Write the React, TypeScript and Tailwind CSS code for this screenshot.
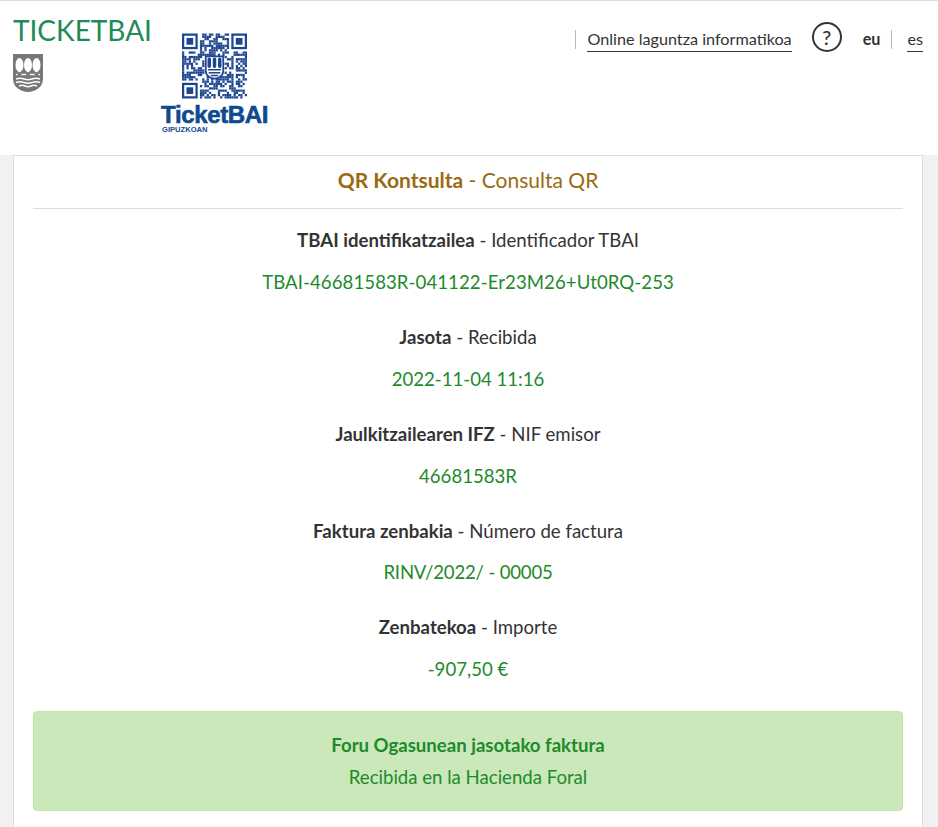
import React from 'react';

const ROWS = [
  { eu: 'TBAI identifikatzailea', es: 'Identificador TBAI', value: 'TBAI-46681583R-041122-Er23M26+Ut0RQ-253', tracking: 'tracking-[0.07px]', gap: 'mb-[15px]' },
  { eu: 'Jasota', es: 'Recibida', value: '2022-11-04 11:16', tracking: '', gap: 'mb-[15px]' },
  { eu: 'Jaulkitzailearen IFZ', es: 'NIF emisor', value: '46681583R', tracking: '', gap: 'mb-[15px]' },
  { eu: 'Faktura zenbakia', es: 'Número de factura', value: 'RINV/2022/ - 00005', tracking: 'tracking-[-0.2px]', gap: 'mb-[14px]' },
  { eu: 'Zenbatekoa', es: 'Importe', value: '-907,50 €', tracking: '', gap: 'mb-[15px]' },
];

const Shield = () => (
  <svg viewBox="0 0 30 38" className="w-[30px] h-[38px] mt-[6.5px]">
    <path d="M0 0H30V25C30 33 22 38 15 38C8 38 0 33 0 25Z" fill="#777777" />
    {[6.5, 15, 23.5].map((x) => (
      <g key={x}>
        <ellipse cx={x} cy="11" rx="4" ry="7" fill="#ffffff" />
        <rect x={x - 1} y="15" width="2" height="6" fill="#ffffff" />
      </g>
    ))}
    <path d="M3 20.5H27" stroke="#ffffff" strokeWidth="1.4" />
    {[6.5, 15, 23.5].map((x) => (
      <circle key={x} cx={x} cy="20" r="2" fill="#777777" />
    ))}
    <path d="M3 25Q7 23.5 11 25T19 25T27 25" stroke="#ffffff" strokeWidth="1.4" fill="none" />
    <path d="M3 28.5Q7 27 11 28.5T19 28.5T27 28.5" stroke="#ffffff" strokeWidth="1.4" fill="none" />
    <path d="M6 32Q9 30.5 12 32T18 32T24 32" stroke="#ffffff" strokeWidth="1.4" fill="none" />
  </svg>
);

// not a real code, only the look of one
const QR_SIZE = 29;
const QR_BLUE = '#1d4690';
const inFinder = (x: number, y: number) =>
  (x < 8 && y < 8) || (x > QR_SIZE - 9 && y < 8) || (x < 8 && y > QR_SIZE - 9);
const inCentre = (x: number, y: number) => x > 9 && x < 19 && y > 9 && y < 19;

const modules: [number, number][] = [];
for (let y = 0; y < QR_SIZE; y++) {
  for (let x = 0; x < QR_SIZE; x++) {
    if (inFinder(x, y) || inCentre(x, y)) continue;
    const h = (x * 7919 + y * 104729 + x * y * 31 + (x ^ y) * 13) % 101;
    if (h % 5 < 3) modules.push([x, y]);
  }
}

const Finder = ({ x, y }: { x: number; y: number }) => (
  <g>
    <rect x={x + 0.5} y={y + 0.5} width="6" height="6" fill="none" stroke={QR_BLUE} />
    <rect x={x + 2} y={y + 2} width="3" height="3" fill={QR_BLUE} />
  </g>
);

const QrCode = () => (
  <svg viewBox="0 0 29 29" className="w-[65px] h-[66px]">
    {modules.map(([x, y]) => (
      <rect key={`${x}-${y}`} x={x} y={y} width="1" height="1" fill={QR_BLUE} />
    ))}
    <Finder x={0} y={0} />
    <Finder x={22} y={0} />
    <Finder x={0} y={22} />
    <g transform="translate(10.6 10.2) scale(0.26)">
      <path d="M0 0H30V25C30 33 22 38 15 38C8 38 0 33 0 25Z" fill="#ffffff" stroke={QR_BLUE} strokeWidth="3" />
      <path d="M6 5V17M15 5V17M24 5V17" stroke={QR_BLUE} strokeWidth="6" strokeLinecap="round" />
      <path d="M4 23H26M5 28H25M9 33H21" stroke={QR_BLUE} strokeWidth="2.5" />
    </g>
  </svg>
);

const App: React.FC = () => {
  return (
    <div className="h-screen overflow-hidden bg-[#f1f1f1] text-[#333333] font-['Lato',sans-serif]">
      {/* Header */}
      <header className="h-[155px] bg-white border-t border-t-[#dddddd] flex justify-between">
        <div className="flex">
          <div className="pl-[13px] pt-[12px] w-[161px]">
            <div className="text-[28px] leading-[34px] text-[#218a55]">TICKETBAI</div>
            <Shield />
          </div>
          <div className="pt-[32px] flex flex-col items-start">
            <div className="ml-[21px]">
              <QrCode />
            </div>
            <div className="font-['Liberation_Sans',sans-serif] font-bold text-[24px] leading-[19px] mt-[6px] text-[#0f4a8f] tracking-[-0.35px] [-webkit-text-stroke:0.6px_#0f4a8f]">
              TicketBAI
            </div>
            <div className="font-['Liberation_Sans',sans-serif] font-bold text-[7.6px] leading-[8px] mt-[2px] ml-px text-[#0f4a8f]">
              GIPUZKOAN
            </div>
          </div>
        </div>
        <nav className="flex items-start pt-[21px] pr-[15px] text-[16.2px]">
          <div className="border-l border-l-[#bbbbbb] pl-[11px] h-[19px] mt-[8px] flex">
            <a className="block h-[22px] leading-[18px] border-b border-b-[#333333]">Online laguntza informatikoa</a>
          </div>
          <div className="ml-[20px] w-[30px] h-[30px] rounded-full border-2 border-[#333333] flex items-center justify-center text-[20px] leading-none font-medium">
            ?
          </div>
          <div className="ml-[21px] mt-[8px] h-[19px] leading-[18px] font-bold border-r border-r-[#bbbbbb] pr-[11px]">eu</div>
          <div className="ml-[15px] mt-[8px]">
            <a className="block h-[22px] leading-[18px] border-b border-b-[#333333]">es</a>
          </div>
        </nav>
      </header>

      {/* Card */}
      <main className="ml-[13px] mr-[15px] bg-white border-x border-t border-[#dddddd] px-[19px] text-center text-[18.6px] leading-[27px]">
        <h1 className="h-[53px] border-b border-b-[#dddddd] text-[21px] leading-[48px] text-[#9a6a12]">
          <span className="font-bold">QR Kontsulta</span> - Consulta QR
        </h1>
        <div className="pt-[18px]">
          {ROWS.map((row) => (
            <div key={row.eu} className="mb-[28px]">
              <p className={row.gap}>
                <span className="font-bold">{row.eu}</span> - {row.es}
              </p>
              <p className={`text-[#1e8a2c] ${row.tracking}`}>{row.value}</p>
            </div>
          ))}
        </div>
        <div className="mt-[15px] h-[100px] rounded-[4px] border border-[#c3e3a8] bg-[#cbe8bb] pt-[17px] text-[#1e8a2c] leading-[32px]">
          <p className="font-bold">Foru Ogasunean jasotako faktura</p>
          <p>Recibida en la Hacienda Foral</p>
        </div>
        <div className="h-[40px]" />
      </main>
    </div>
  );
};

export default App;
